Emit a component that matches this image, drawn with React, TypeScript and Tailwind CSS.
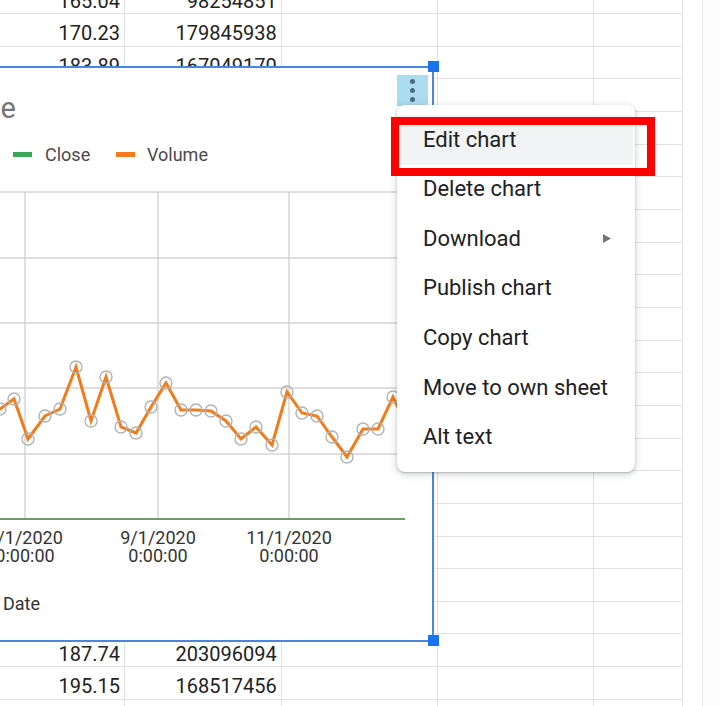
import React from "react";

const ROW_H = "h-[32.67px]";

type Row = { a?: string; b?: string; first?: boolean };

const rows: Row[] = [
  { a: "165.04", b: "98254851", first: true },
  { a: "170.23", b: "179845938" },
  { a: "183.89", b: "167049170" },
  ...Array.from({ length: 17 }, () => ({})),
  { a: "187.74", b: "203096094" },
  { a: "195.15", b: "168517456" },
  {},
];

const pts: [number, number][] = [
  [-15, 421], [0, 409], [14, 399], [28, 439], [45, 416], [60, 409], [76, 367], [91, 421],
  [106, 377], [121, 427], [136, 433], [151, 407], [166, 383], [181, 410],
  [196, 410], [211, 411], [226, 421], [241, 439], [256, 427], [272, 445],
  [287, 392], [302, 413], [317, 416], [332, 437], [347, 457], [363, 429],
  [378, 429], [393, 397], [408, 428],
];

function Cell({ w, text }: { w: string; text?: string }) {
  return (
    <div className={`${w} h-full shrink-0 border-r border-b border-[#e2e2e2] flex items-end justify-end pr-[4px] pb-[2.5px]`}>
      {text ? <span className="text-[20px] leading-none text-[#222222] whitespace-nowrap">{text}</span> : null}
    </div>
  );
}

function Chart() {
  const line = pts.map((p) => p.join(",")).join(" ");
  const hLines = [192, 258, 323, 388, 454];
  const vLines = [25, 158, 289];
  return (
    <div className="absolute left-[-20px] top-[66px] w-[454px] h-[576px] border-2 border-[#4a86e0] bg-white overflow-hidden">
      <svg width="450" height="572" viewBox="-18 68 450 572" className="block" fontFamily="Roboto, sans-serif">
        <text x="16" y="118" fontSize="29" fill="#757575" textAnchor="end">e</text>
        <rect x="13" y="152" width="19" height="5" fill="#3aa757" />
        <text x="45" y="160.5" fontSize="18" fill="#4a4a4a">Close</text>
        <rect x="116" y="152" width="19" height="5" fill="#f47b20" />
        <text x="147" y="160.5" fontSize="18" fill="#4a4a4a">Volume</text>
        {hLines.map((y) => (
          <line key={y} x1="-18" x2="405" y1={y} y2={y} stroke="#d3d3d3" strokeWidth="1.4" />
        ))}
        {vLines.map((x) => (
          <line key={x} x1={x} x2={x} y1="192" y2="519" stroke="#d3d3d3" strokeWidth="1.4" />
        ))}
        <line x1="-18" x2="405" y1="519" y2="519" stroke="#64a45f" strokeWidth="2" />
        <polyline points={line} fill="none" stroke="#f07c1c" strokeWidth="3" strokeLinejoin="miter" />
        {pts.slice(1).map(([x, y]) => (
          <circle key={x} cx={x} cy={y} r="6" fill="none" stroke="#b3b3b3" strokeWidth="1.4" />
        ))}
        {[
          [25, "7/1/2020"],
          [158, "9/1/2020"],
          [289, "11/1/2020"],
        ].map(([x, d]) => (
          <g key={String(x)}>
            <text x={x} y="543.5" fontSize="18" fill="#333333" textAnchor="middle">{d}</text>
            <text x={x} y="561.5" fontSize="18" fill="#333333" textAnchor="middle">0:00:00</text>
          </g>
        ))}
        <text x="3" y="609.5" fontSize="18" fill="#333333">Date</text>
      </svg>
    </div>
  );
}

const items = ["Edit chart", "Delete chart", "Download", "Publish chart", "Copy chart", "Move to own sheet", "Alt text"];

function Menu() {
  return (
    <div className="absolute left-[397px] top-[105px] w-[238px] rounded-[8px] bg-white py-[10px] shadow-[0_2px_6px_2px_rgba(60,64,67,0.15),0_1px_2px_rgba(60,64,67,0.3)]">
      {items.map((t, i) => (
        <div
          key={t}
          className={`h-[49.57px] flex items-center justify-between pl-[26px] pr-[24px] text-[22px] leading-none text-[#202124] ${i === 0 ? "bg-[#f1f3f4] mr-[2px]" : ""}`}
        >
          <span>{t}</span>
          {t === "Download" ? (
            <svg width="8" height="9" viewBox="0 0 8 9">
              <polygon points="0,0 8,4.5 0,9" fill="#757575" />
            </svg>
          ) : null}
        </div>
      ))}
    </div>
  );
}

export default function App() {
  return (
    <div className="relative w-[720px] h-[706px] overflow-hidden bg-white font-['Roboto',sans-serif]">
      <div className="flex h-full">
        <div className="w-[683.34px] shrink-0 flex flex-col">
          {rows.map((r, i) => (
            <div key={i} className={`flex shrink-0 ${r.first ? "h-[14px]" : ROW_H}`}>
              <Cell w="w-[125px]" text={r.a} />
              <Cell w="w-[156.67px]" text={r.b} />
              <Cell w="w-[156px]" />
              <Cell w="w-[156.67px]" />
              <Cell w="w-[89px]" />
            </div>
          ))}
        </div>
        <div className="w-[18.4px] shrink-0 bg-white" />
        <div className="flex-1 border-l border-[#e8e8e8] bg-[#fdfdfd]" />
      </div>

      <Chart />
      <div className="absolute left-[428px] top-[61px] w-[11px] h-[11px] bg-[#1a73e8]" />
      <div className="absolute left-[428px] top-[635px] w-[11px] h-[11px] bg-[#1a73e8]" />

      <div className="absolute left-[397px] top-[75px] w-[31px] h-[31px] bg-[#abdcf0] flex flex-col items-center gap-[4px] pt-[4px]">
        <div className="w-[5px] h-[5px] rounded-full bg-[#4b6b7b]" />
        <div className="w-[5px] h-[5px] rounded-full bg-[#4b6b7b]" />
        <div className="w-[5px] h-[5px] rounded-full bg-[#4b6b7b]" />
      </div>

      <Menu />
      <div className="absolute left-[391px] top-[117px] w-[264px] h-[59px] border-[8px] border-[#ff0000]" />
    </div>
  );
}
